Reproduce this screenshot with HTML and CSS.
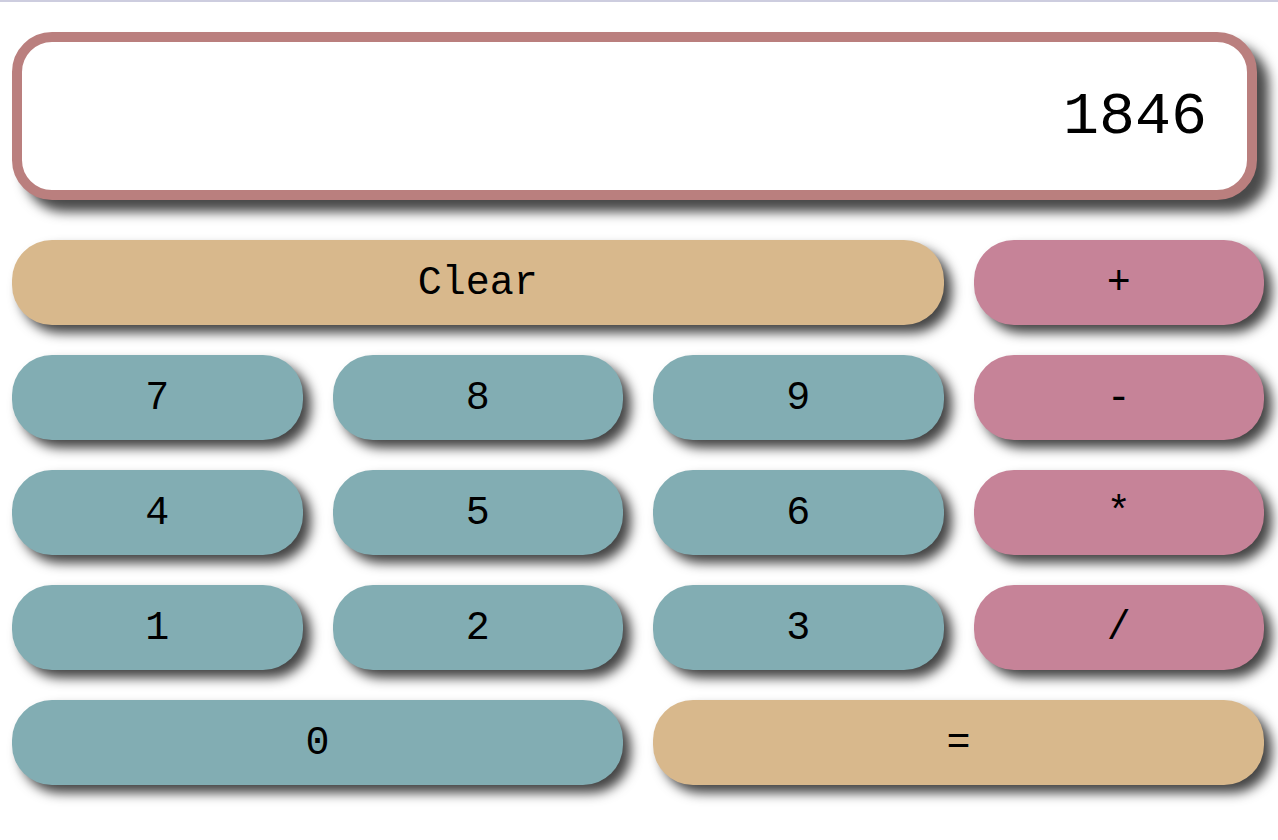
FILE: index.html
```html
<!DOCTYPE html>
<html lang="en">
<head>
<meta charset="utf-8">
<title>Calculator</title>
<link rel="stylesheet" href="styles.css">
</head>
<body>
<main class="calculator">
<input class="display" type="text" value="1846" aria-label="Result" readonly>
<div class="keys">
<button class="key action clear">Clear</button>
<button class="key operator">+</button>
<button class="key">7</button>
<button class="key">8</button>
<button class="key">9</button>
<button class="key operator">-</button>
<button class="key">4</button>
<button class="key">5</button>
<button class="key">6</button>
<button class="key operator">*</button>
<button class="key">1</button>
<button class="key">2</button>
<button class="key">3</button>
<button class="key operator">/</button>
<button class="key wide">0</button>
<button class="key action wide">=</button>
</div>
</main>
</body>
</html>
```

FILE: styles.css
```css
* {
  box-sizing: border-box;
}

body {
  margin: 0;
  background: #fff;
  border-top: 2px solid #cdcddf;
}

.calculator {
  display: flex;
  flex-direction: column;
  gap: 40px;
  padding: 30px 14px 30px 12px;
}

.display {
  height: 168px;
  margin-right: 7px;
  padding: 2px 40px 0;
  border: 10px solid #ba7f7e;
  border-radius: 40px;
  background: #fff;
  box-shadow: 12px 12px 12px #4a4a4a;
  color: #000;
  font: 60px "Liberation Mono", monospace;
  text-align: right;
}

.keys {
  display: grid;
  grid-template-columns: repeat(4, 1fr);
  gap: 30px;
}

.key {
  height: 85px;
  padding: 2px 0 0;
  border: 0;
  border-radius: 40px;
  background: #82adb3;
  box-shadow: 8px 8px 12px #444;
  color: #000;
  font: 40px "Liberation Mono", monospace;
}

.operator {
  background: #c68398;
}

.action {
  background: #d8b88c;
}

.clear {
  grid-column: span 3;
}

.wide {
  grid-column: span 2;
}
```
